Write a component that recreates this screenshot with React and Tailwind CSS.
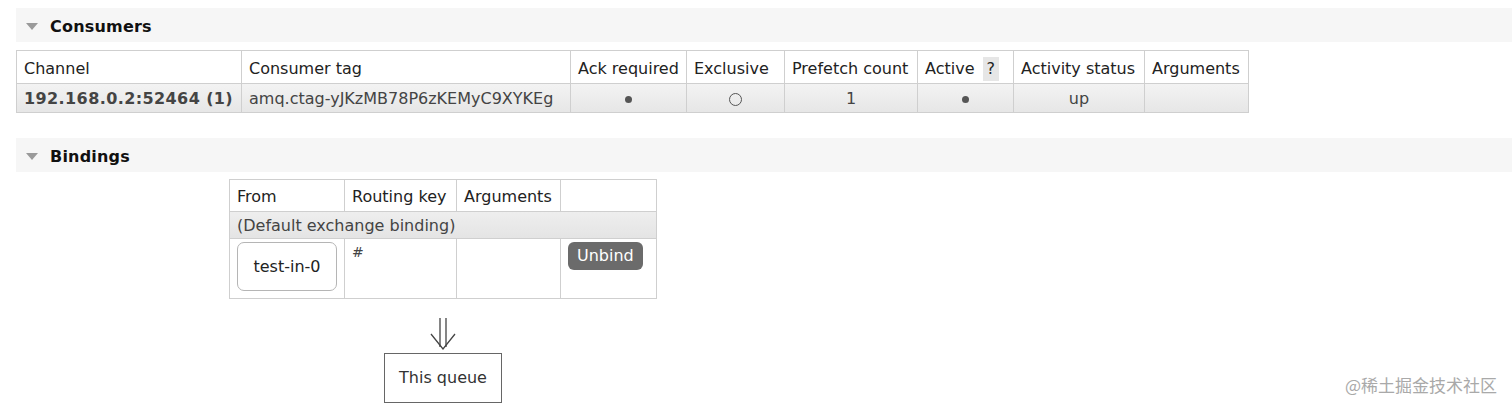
import React from 'react';

const font = { fontFamily: '"DejaVu Sans", Verdana, sans-serif' };

function SectionHeader({ title }) {
    return (
        <div className="ml-4 h-[34px] bg-[#f6f6f6] flex items-center">
            <span className="ml-[10px] mt-[2px] w-0 h-0 border-l-[6px] border-r-[6px] border-t-[7px] border-l-transparent border-r-transparent border-t-[#9a9a9a]" />
            <h2 className="ml-3 mt-[3px] text-[16px] font-bold text-[#111] tracking-[0.2px]">{title}</h2>
        </div>
    );
}

const th = 'border border-[#cfcfcf] px-[7px] pt-[3px] text-left font-normal text-[#222]';
const td = 'border border-[#cfcfcf] px-[7px] pt-[2px] text-[#444]';

export default function App() {
    return (
        <div className="relative w-[1512px] h-[417px] bg-white overflow-hidden text-[16px]" style={font}>
            <div className="pt-2">
                <SectionHeader title="Consumers" />

                <table className="ml-4 mt-2 border-collapse table-fixed">
                    <thead>
                        <tr className="h-[33px] bg-white">
                            <th className={`${th} w-[225px]`}>Channel</th>
                            <th className={`${th} w-[329px]`}>Consumer tag</th>
                            <th className={`${th} w-[116px]`}>Ack required</th>
                            <th className={`${th} w-[98px]`}>Exclusive</th>
                            <th className={`${th} w-[133px]`}>Prefetch count</th>
                            <th className={`${th} w-[96px]`}>
                                Active <span className="ml-[3px] inline-block px-[4px] bg-[#e6e6e6] leading-[24px]">?</span>
                            </th>
                            <th className={`${th} w-[131px]`}>Activity status</th>
                            <th className={`${th} w-[104px]`}>Arguments</th>
                        </tr>
                    </thead>
                    <tbody>
                        <tr className="h-[29px] bg-gradient-to-b from-[#f3f3f3] to-[#e6e6e6]">
                            <td className={`${td} font-bold text-[#111] tracking-[0.4px]`}>192.168.0.2:52464 (1)</td>
                            <td className={td}>amq.ctag-yJKzMB78P6zKEMyC9XYKEg</td>
                            <td className={`${td} text-center`}>
                                <span className="inline-block w-[7px] h-[7px] rounded-full bg-[#555] align-middle" />
                            </td>
                            <td className={`${td} text-center`}>
                                <span className="inline-block w-[13px] h-[13px] rounded-full border border-[#555] align-middle" />
                            </td>
                            <td className={`${td} text-center`}>1</td>
                            <td className={`${td} text-center`}>
                                <span className="inline-block w-[7px] h-[7px] rounded-full bg-[#555] align-middle" />
                            </td>
                            <td className={`${td} text-center`}>up</td>
                            <td className={td}></td>
                        </tr>
                    </tbody>
                </table>

                <div className="mt-[25px]">
                    <SectionHeader title="Bindings" />
                </div>

                <table className="ml-[229px] mt-[7px] border-collapse table-fixed">
                    <thead>
                        <tr className="h-[32px]">
                            <th className={`${th} w-[115px]`}>From</th>
                            <th className={`${th} w-[112px]`}>Routing key</th>
                            <th className={`${th} w-[104px]`}>Arguments</th>
                            <th className={`${th} w-[96px]`}></th>
                        </tr>
                    </thead>
                    <tbody>
                        <tr className="h-[27px] bg-gradient-to-b from-[#eeeeee] to-[#e4e4e4]">
                            <td colSpan={4} className={td}>(Default exchange binding)</td>
                        </tr>
                        <tr className="h-[60px] align-top">
                            <td className="border border-[#cfcfcf] p-[3px_7px]">
                                <div className="w-[100px] h-[49px] border border-[#b5b5b5] rounded-[7px] flex items-center justify-center text-[#222]">
                                    test-in-0
                                </div>
                            </td>
                            <td className="border border-[#cfcfcf] px-[7px] pt-[3px] text-[14px] text-[#444]">#</td>
                            <td className="border border-[#cfcfcf]"></td>
                            <td className="border border-[#cfcfcf] px-[7px] pt-[3px]">
                                <button className="h-[28px] px-[9px] rounded-[6px] bg-[#6b6b6b] text-white text-[16px] leading-none">
                                    Unbind
                                </button>
                            </td>
                        </tr>
                    </tbody>
                </table>

                <div className="ml-[384px] w-[118px] flex flex-col items-center">
                    <svg width="30" height="33" viewBox="0 0 30 33" className="mt-[18px]" fill="none" stroke="#444" strokeWidth="1.3">
                        <line x1="12" y1="1" x2="12" y2="30" />
                        <line x1="18" y1="1" x2="18" y2="30" />
                        <polyline points="3,17 15,32 27,17" />
                    </svg>
                    <div className="mt-[3px] w-[118px] h-[50px] border border-[#666] flex items-center justify-center text-[#333]">
                        This queue
                    </div>
                </div>
            </div>

            <div
                className="absolute right-[15px] bottom-[20px] text-[17px] text-[#a9a9a9]"
                style={{ fontFamily: '"Noto Sans CJK SC", "Noto Sans", sans-serif' }}
            >
                @稀土掘金技术社区
            </div>
        </div>
    );
}
